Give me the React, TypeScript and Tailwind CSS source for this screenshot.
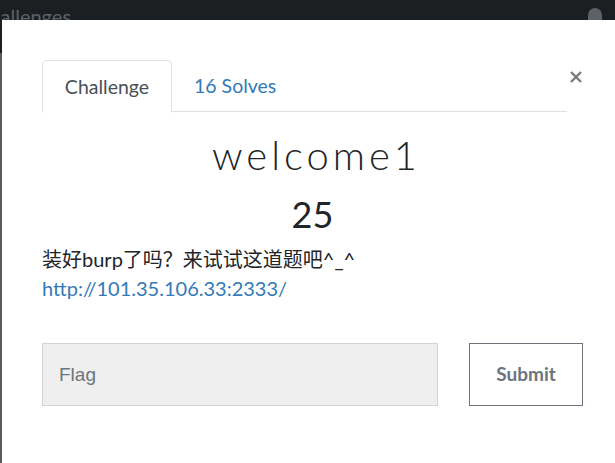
export default function App() {
  return (
    <div className="w-[615px] h-[463px] overflow-hidden bg-[#1c1f22] flex flex-col" style={{ fontFamily: "Lato, 'Noto Sans CJK SC', sans-serif" }}>
      <div className="h-[20px] shrink-0 overflow-hidden relative">
        <span className="absolute left-[-24px] top-[6px] text-[20px] text-[#5d6166] leading-none">Challenges</span>
        <span className="absolute left-[588px] top-[8px] w-[14px] h-[16px] rounded-t-full bg-[#5d6166]" />
      </div>
      <div className="flex flex-1">
        <div className="w-[2px] flex flex-col">
          <div className="h-[33px] bg-[#1c1f22]" />
          <div className="flex-1 bg-[#5a5a5a]" />
        </div>
        <div className="flex-1 bg-white relative pt-[40px] pl-[40px]">
          <button className="absolute left-[565px] top-[48px] w-[18px] h-[18px] flex items-center justify-center">
            <svg width="14" height="14" viewBox="0 0 14 14">
              <path d="M2 2 L12 12 M12 2 L2 12" stroke="#7a7a7a" strokeWidth="2.4" strokeLinecap="butt" />
            </svg>
          </button>
          <div className="w-[541px]">
            <div className="flex w-[525px] border-b border-[#dee2e6] h-[52px]">
              <div className="w-[130px] h-[53px] border border-[#dee2e6] border-b-white rounded-t-[5px] bg-white flex items-center justify-center text-[19.5px] text-[#495057]">
                Challenge
              </div>
              <div className="pl-[22px] flex items-center text-[19.5px] text-[#337ab7]">16 Solves</div>
            </div>
            <h3 className="text-center text-[40px] font-light tracking-[4px] text-[#212529] leading-none mt-[23px] pl-[8px]">welcome1</h3>
            <h4 className="text-center text-[36px] text-[#212529] leading-none mt-[21px]">25</h4>
            <p className="mt-[13px] text-[20px] text-[#212529] leading-[29px]">装好burp了吗？来试试这道题吧^_^</p>
            <a className="block text-[20px] text-[#337ab7] leading-[29px]">
              http://101.35.106.33:2333/
            </a>
            <div className="flex mt-[40px] gap-[31px]">
              <input
                placeholder="Flag"
                className="w-[396px] h-[63px] bg-[#efefef] border border-[#ced4da] px-[16px] text-[19px] placeholder:text-[#6c757d] outline-none"
                style={{ fontFamily: "'Liberation Sans', sans-serif" }}
              />
              <button className="w-[114px] h-[63px] border border-[#6c757d] text-[#6c757d] font-bold text-[19px] bg-white">
                Submit
              </button>
            </div>
          </div>
        </div>
      </div>
    </div>
  );
}
